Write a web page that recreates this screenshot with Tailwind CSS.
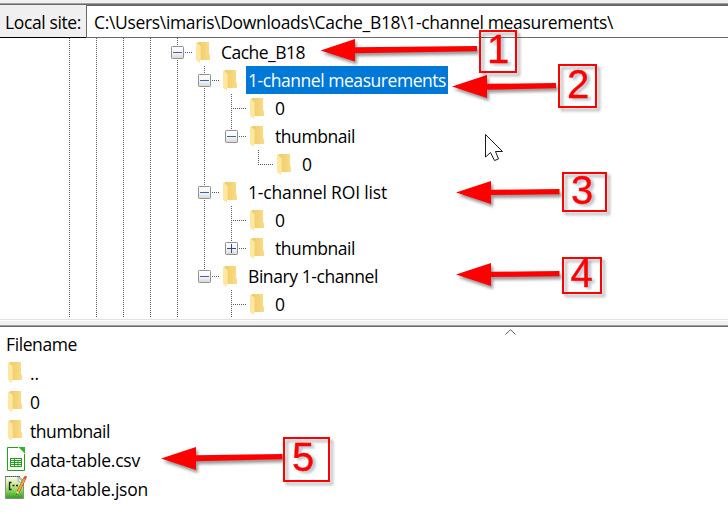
<!DOCTYPE html>
<html lang="en">
<head>
<meta charset="utf-8">
<title>Local site</title>
<script src="https://cdn.jsdelivr.net/npm/@tailwindcss/browser@4"></script>
</head>
<body class="relative flex h-[514px] w-[728px] flex-col overflow-hidden bg-white font-['Open_Sans','Noto_Sans',sans-serif] text-[17.5px] leading-[28px] text-black whitespace-pre">
<svg class="absolute h-0 w-0">
  <defs>
    <linearGradient id="gf" x1="0" x2="1"><stop offset="0" stop-color="#edc968"/><stop offset="1" stop-color="#fbdc86"/></linearGradient>
    <linearGradient id="gb" x1="0" x2="0" y1="0" y2="1"><stop offset="0" stop-color="#fff"/><stop offset=".55" stop-color="#f4f4f4"/><stop offset="1" stop-color="#d6d6d6"/></linearGradient>
    <linearGradient id="gn" x1="0" x2="0" y1="0" y2="1"><stop offset="0" stop-color="#f8fbf2"/><stop offset=".3" stop-color="#d3efa6"/><stop offset=".65" stop-color="#8fd455"/><stop offset="1" stop-color="#279c20"/></linearGradient>
    <symbol id="folder" viewBox="0 0 14 21"><path d="M2 0H13V12L14 13V18H4L1 2Z" fill="url(#gf)"/><path d="M0 .5 3.5 3 4.7 4V18L4 18.3V21L0 18Z" fill="#ffe7a0"/></symbol>
    <symbol id="minus" viewBox="0 0 13 13"><rect x=".5" y=".5" width="12" height="12" rx=".8" fill="url(#gb)" stroke="#919191"/><path d="M2 6.5H11" stroke="#4560a8"/></symbol>
    <symbol id="plus" viewBox="0 0 13 13"><rect x=".5" y=".5" width="12" height="12" rx=".8" fill="url(#gb)" stroke="#919191"/><path d="M2 6.5H11M6.5 2V11" stroke="#34488f"/></symbol>
  </defs>
</svg>

<div class="h-[3px] shrink-0 bg-[#f0f0f0]"></div>
<div class="h-px shrink-0 bg-[#a0a0a0]"></div>
<div class="h-px shrink-0 bg-[#696969]"></div>
<header class="flex h-[33px] shrink-0">
  <div class="w-[86px] shrink-0 border-b border-black bg-[#f0f0f0] pt-[3px] pl-[5px]"><span data-w="76">Local site:</span></div>
  <div class="grow border-t border-b border-l border-[#696969] pt-[2px] pl-[7px]"><span data-w="519">C:\Users\imaris\Downloads\Cache_B18\1-channel measurements\</span></div>
</header>

<main id="tree" class="flex h-[281px] shrink-0 flex-col overflow-hidden pl-[56px]"></main>

<div class="h-px shrink-0 bg-[#e3e3e3]"></div>
<div class="h-px shrink-0 bg-white"></div>
<div class="h-[4px] shrink-0 bg-[#f0f0f0]"></div>
<div class="h-px shrink-0 bg-[#a0a0a0]"></div>
<div class="h-px shrink-0 bg-[#696969]"></div>

<section class="flex flex-col">
  <div class="flex h-[32px] items-start pl-[5px]">
    <span class="w-[500px] pt-[3px] pl-px"><span data-w="71">Filename</span></span>
    <svg class="mt-[2px] h-[6px] w-[11px]" viewBox="0 0 11 6" fill="none" stroke="#5a5a5a"><path d="M.5 5.5 5.5 .7 10.5 5.5"/></svg>
  </div>
  <div class="flex h-[29px] pl-[8px]"><svg class="mt-[3px] h-[21px] w-[14px]"><use href="#folder"/></svg><span class="ml-[8px]" data-w="9">..</span></div>
  <div class="flex h-[29px] pl-[8px]"><svg class="mt-[3px] h-[21px] w-[14px]"><use href="#folder"/></svg><span class="ml-[8px]" data-w="11">0</span></div>
  <div class="flex h-[29px] pl-[8px]"><svg class="mt-[3px] h-[21px] w-[14px]"><use href="#folder"/></svg><span class="ml-[8px]" data-w="80">thumbnail</span></div>
  <div class="flex h-[29px] pl-[7px]">
    <svg class="mt-[1px] h-[24px] w-[18px]" viewBox="0 0 18 24"><path d="M.5 .5H12L17.5 6V23.500H.5Z" fill="#fff" stroke="#22a01c"/><path d="M11 0H18V7Z" fill="#35b52b"/><path d="M11 0 18 7" stroke="#d3f3cf"/><path d="M3 11H15V20H3Z" fill="#22a01c"/><path d="M4 12.500H7M8 12.500H14M4 14.500H7M8 14.500H10.500M11.500 14.500H14M4 16.500H7M8 16.500H10.500M11.500 16.500H14M4 18.500H7M8 18.500H10.500M11.500 18.500H14" stroke="#fff"/></svg>
    <span class="ml-[5px]" data-w="110">data-table.csv</span>
  </div>
  <div class="flex h-[29px] pl-[4px]">
    <svg class="h-[25px] w-[23px]" viewBox="0 0 23 25"><path d="M1.500 1.500H15L19.500 6V23.500H1.500Z" fill="url(#gn)" stroke="#8c9188"/><path d="M1 1.500H17" stroke="#555" stroke-dasharray="1 1"/><path d="M14 2V7H19Z" fill="#e7e7e7" stroke="#999" stroke-width=".7"/><path d="M7.500 7.500H5.500V14.500H7.500M8.500 10.500H10.500M12 10.500H14" fill="none" stroke="#222" stroke-width="1.300"/><path d="M21 3 14 17" stroke="#8d5a18" stroke-width="2.800"/><path d="M21 3 14.200 16.500" stroke="#f4aa36" stroke-width="1.900"/><path d="M20.700 4 22 1" stroke="#cf5a3a" stroke-width="2.500"/><path d="M12.800 16 12 20 15.300 17.300Z" fill="#f3dcaf"/><path d="M12 20 12.300 18.200 13.500 19Z" fill="#222"/></svg>
    <span class="ml-[3px]" data-w="118">data-table.json</span>
  </div>
</section>

<!-- Annotations and pointer over the panes -->
<svg class="absolute top-0 left-0 h-[514px] w-[728px]" viewBox="0 0 728 514">
  <g class="drop-shadow-[2px_3px_1.5px_rgba(0,0,0,0.4)]" fill="#f00">
    <path d="M320.500 50.500 355 39V47.200L477 46V51.300L355 53.200V61.500Z"/>
    <path d="M452 86.500 487 75V83.800L556 83V88.300L487 89.700V98Z"/>
    <path d="M456 192.500 491 181V189.800L559.500 189V194.300L491 195V204Z"/>
    <path d="M456 274.500 491 263V271.800L559.500 271V276.300L491 277V286Z"/>
    <path d="M161 458.500 196 447V455.200L282.500 454V459.300L196 461.200V470Z"/>
  </g>
  <g class="drop-shadow-[3px_3px_1.5px_rgba(0,0,0,0.32)]" fill="none" stroke="#f00" stroke-width="2">
    <rect x="480" y="31" width="36" height="41"/>
    <rect x="559" y="65" width="37" height="42"/>
    <rect x="563" y="173" width="43" height="38"/>
    <rect x="563" y="258" width="38" height="35"/>
    <rect x="284" y="438" width="45" height="43"/>
  </g>
  <g class="font-['Liberation_Sans',sans-serif] text-[40px] drop-shadow-[3px_2px_1.5px_rgba(60,90,120,0.4)]" fill="#f00" stroke="#f00" stroke-width=".4">
    <text x="487" y="63">1</text>
    <text x="567" y="98">2</text>
    <text x="571" y="203.500">3</text>
    <text x="570.500" y="287">4</text>
    <text x="292" y="471">5</text>
  </g>
  <path d="M485.500 134.500V157L490.500 152.500 494.500 160.500 498.500 159 495.500 151.500H502.500Z" fill="#fff" stroke="#1b1b28"/>
</svg>

<script>
  // Guide cells: v full line, s line with stub, e corner with stub, blank;
  // M / m minus box with / without a line below, p plus box.
  const rows = [
    ['vvvvM', 'Cache_B18', 84],
    ['vvvvvM', '1-channel measurements', 198, true],
    ['vvvvvvs', '0', 11],
    ['vvvvvvm', 'thumbnail', 80],
    ['vvvvvv e', '0', 11],
    ['vvvvvM', '1-channel ROI list', 139],
    ['vvvvvvs', '0', 11],
    ['vvvvvvp', 'thumbnail', 80],
    ['vvvvvm', 'Binary 1-channel', 130],
    ['vvvvv s', '0', 11],
  ];
  const full = '<i class="absolute top-0 left-[13px] h-[28px] w-px bg-[repeating-linear-gradient(#5c5c5c_0_1px,transparent_1px_2px)]"></i>';
  const half = '<i class="absolute top-0 left-[13px] h-[14px] w-px bg-[repeating-linear-gradient(#5c5c5c_0_1px,transparent_1px_2px)]"></i>';
  const stub = '<i class="absolute top-[14px] left-[13px] h-px w-[16px] bg-[repeating-linear-gradient(90deg,#5c5c5c_0_1px,transparent_1px_2px)]"></i>';
  const box = n => '<svg class="absolute top-[8px] left-[7px] h-[13px] w-[13px]"><use href="#' + n + '"/></svg>';
  const art = { v: full, s: full + stub, e: half + stub, ' ': '', M: full + stub + box('minus'), m: half + stub + box('minus'), p: half + stub + box('plus') };
  document.getElementById('tree').innerHTML = rows.map(([g, t, w, sel]) =>
    '<div class="flex h-[28px] shrink-0">' +
    [...g].map(c => '<div class="relative h-[28px] w-[27px] shrink-0">' + art[c] + '</div>').join('') +
    '<svg class="mt-[4px] ml-[5px] h-[21px] w-[14px] shrink-0"><use href="#folder"/></svg>' +
    '<div class="' + (sel ? 'ml-[9px] h-[28px] w-[202px] bg-[#0078d7] pl-[2px] text-white' : 'ml-[9px] pl-[2px]') + '"><span data-w="' + w + '">' + t + '</span></div></div>').join('');

  // Letter spacing follows from each label's intended width.
  const ctx = document.createElement('canvas').getContext('2d');
  ctx.font = "17.5px 'Open Sans', 'Noto Sans', sans-serif";
  document.querySelectorAll('[data-w]').forEach(s => {
    s.style.letterSpacing = (s.dataset.w - ctx.measureText(s.textContent).width) / s.textContent.length + 'px';
  });
</script>
</body>
</html>
